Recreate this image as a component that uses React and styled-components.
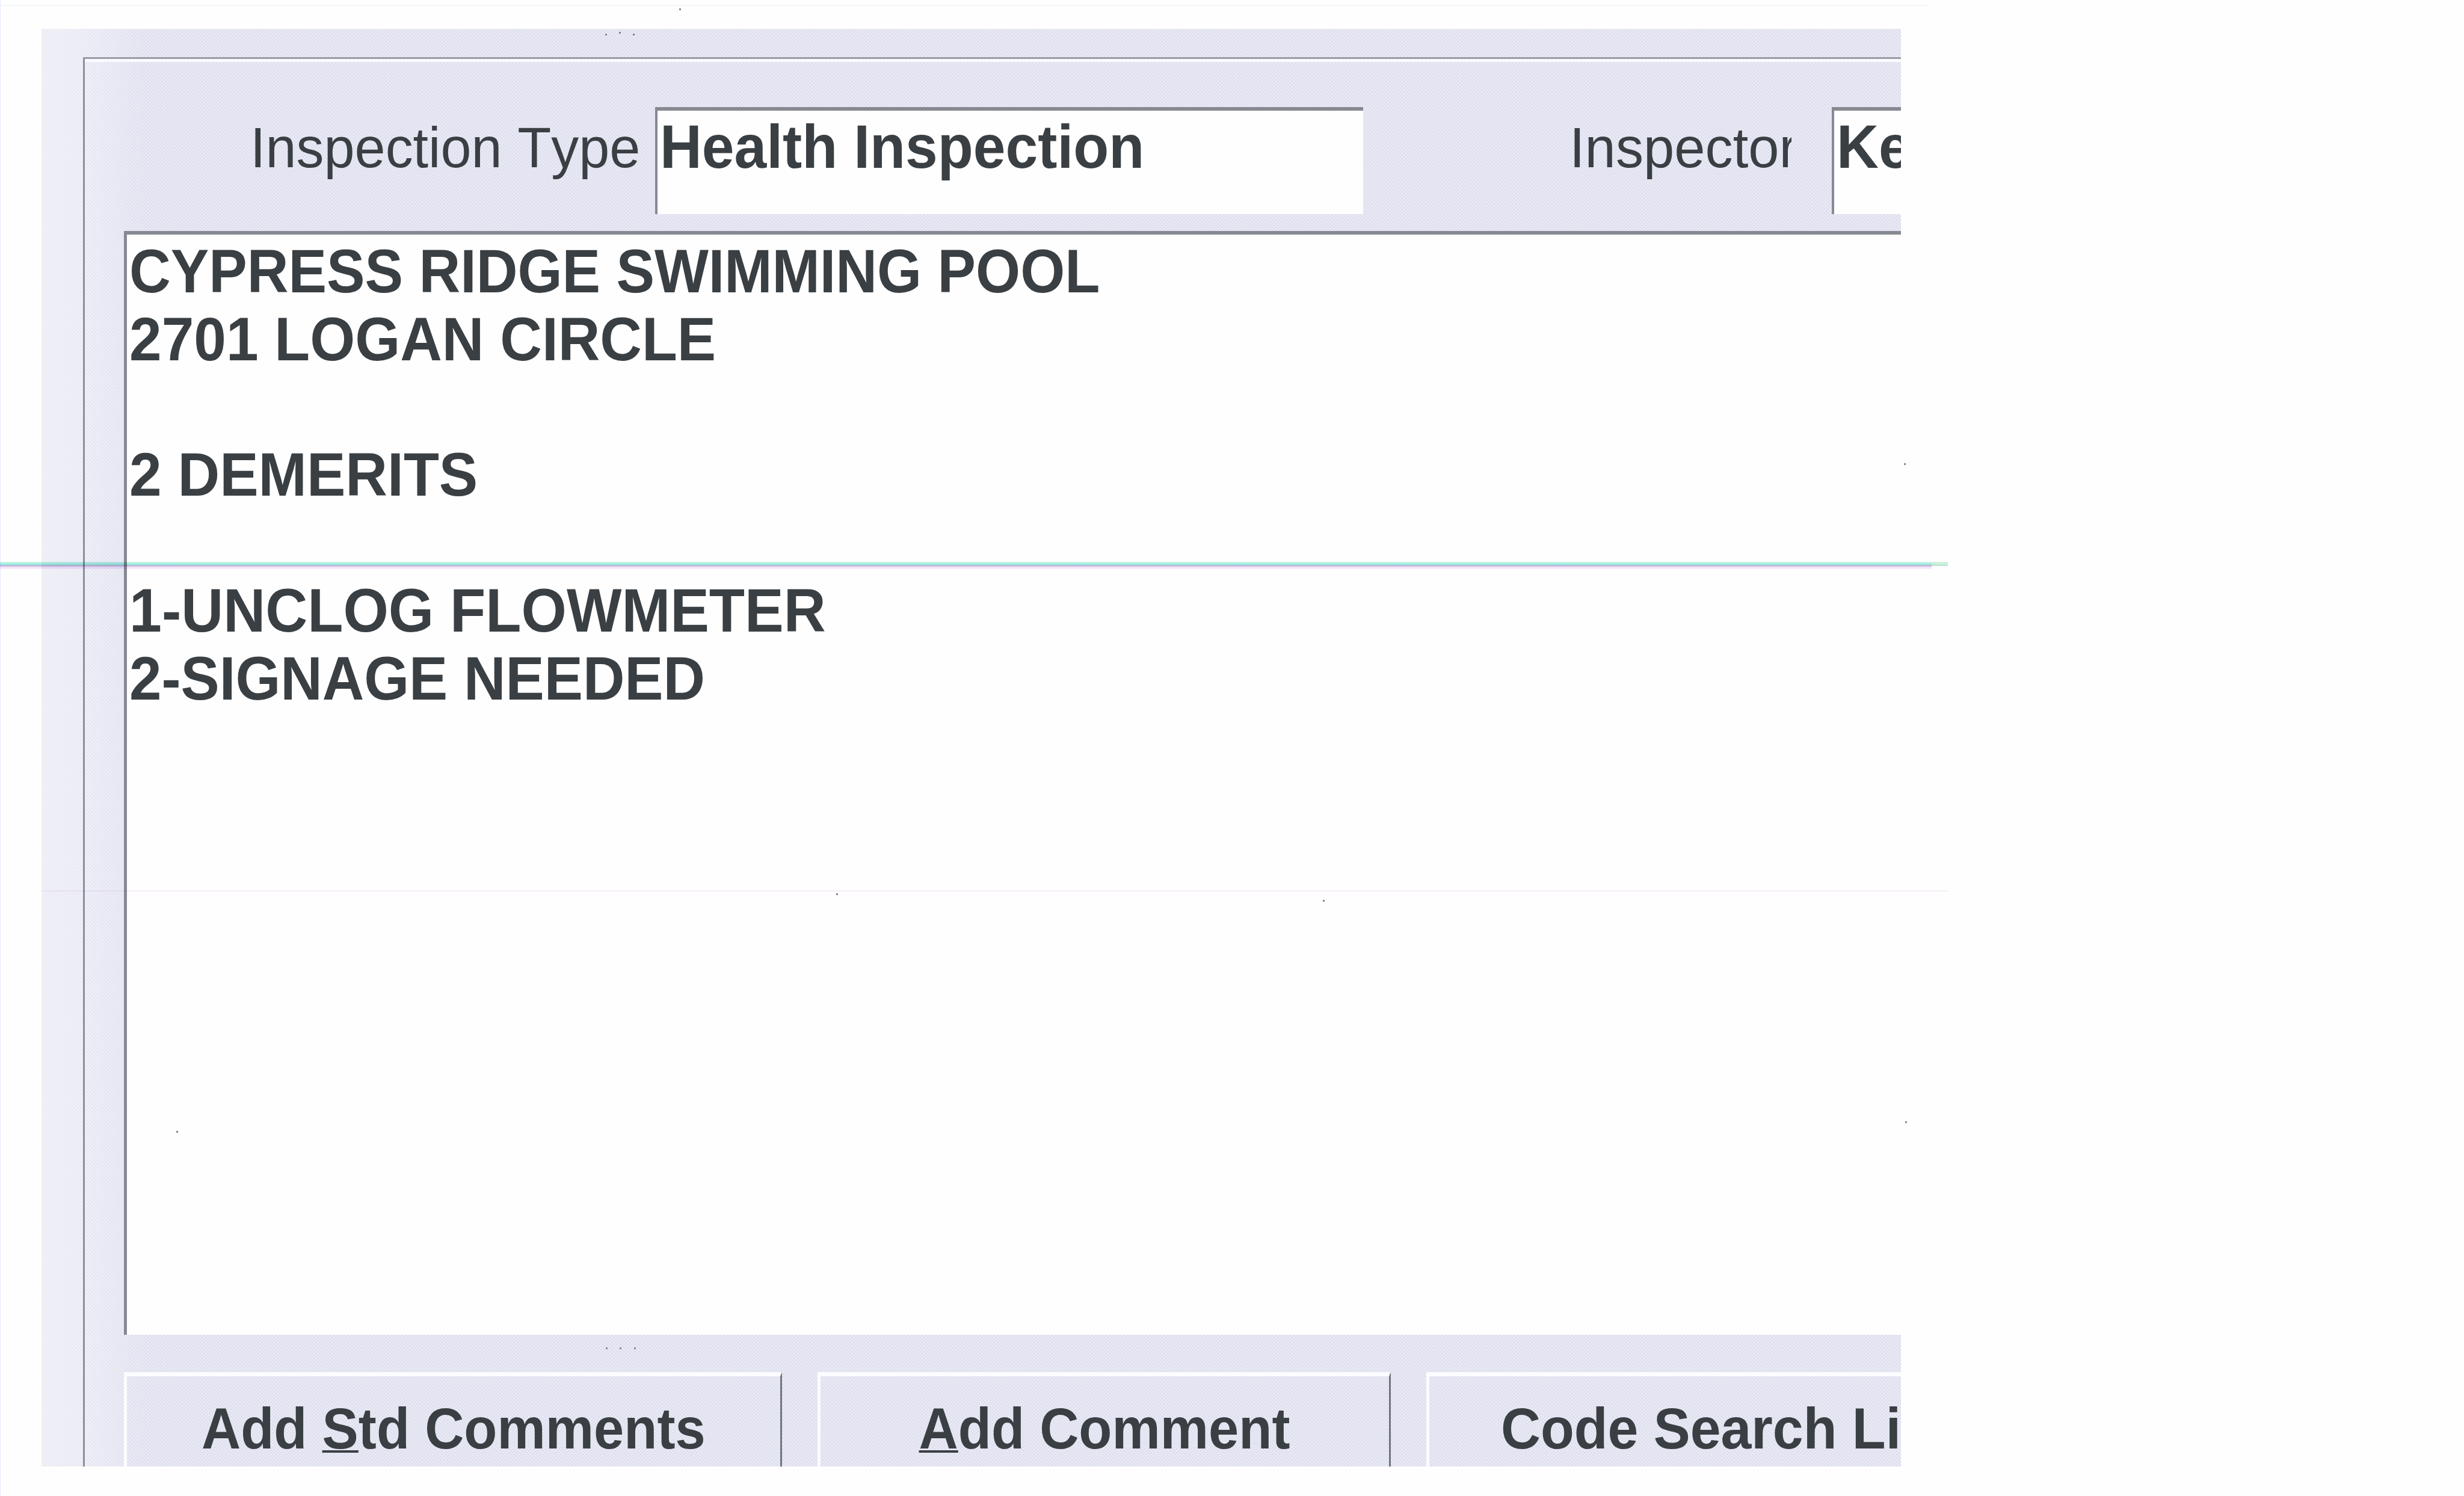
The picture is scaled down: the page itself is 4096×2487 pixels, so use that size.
import React from 'react'
import styled, { createGlobalStyle, css } from 'styled-components'

const GlobalStyle = createGlobalStyle`
  * {
    box-sizing: border-box;
  }
  body {
    margin: 0;
    background: #fefefe;
  }
`

const ink = '#3a3f43'
const edge = '#878992'

const Page = styled.div`
  position: relative;
  width: 4096px;
  height: 2487px;
  padding: 48px 0 0 69px;
  overflow: hidden;
  color: ${ink};
  font-family: "Liberation Sans", Arial, sans-serif;
  font-kerning: none;
  line-height: 112.8px;
  white-space: pre;
`

const Panel = styled.div`
  width: 3091px;
  height: 2390px;
  padding: 47px 0 0 69px;
  overflow: hidden;
  background-color: #e9eaf5;
  background-image:
    linear-gradient(90deg, rgba(255, 255, 255, 0.4) 0, rgba(255, 255, 255, 0.3) 69px, transparent 170px),
    radial-gradient(circle, rgba(190, 192, 216, 0.3) 1px, transparent 2px),
    radial-gradient(circle, rgba(190, 192, 216, 0.3) 1px, transparent 2px);
  background-size: 100% 100%, 6px 6px, 6px 6px;
  background-position: 0 0, 0 0, 3px 3px;
`

const Frame = styled.div`
  display: flex;
  flex-direction: column;
  width: 3200px;
  height: 2400px;
  padding: 80px 0 0 65px;
  border-top: 3px solid #9a9ba5;
  border-left: 3px solid #8e9099;
  box-shadow: inset 0 5px 0 #fafaff;
`

const FieldRow = styled.div`
  display: flex;
  align-items: flex-start;
  height: 206px;
`

const Label = styled.div`
  flex: none;
  width: ${({ width }) => width}px;
  margin-left: ${({ indent }) => indent}px;
  padding-top: 12px;
  overflow: hidden;
  font-size: 94.4px;
`

const Squeezed = styled.div`
  width: max-content;
  transform: scaleX(${({ ratio }) => ratio});
  transform-origin: ${({ origin }) => origin || 'left'} center;
`

const sunken = css`
  border-style: solid;
  border-color: ${edge};
  background: #fefefe;
  font-size: 101.4px;
  font-weight: bold;
`

const Field = styled.div`
  ${sunken}
  flex: none;
  width: ${({ width }) => width}px;
  height: 178px;
  margin-left: ${({ gap }) => gap}px;
  padding: 4px 0 0 4px;
  border-width: 6px 0 0 4px;
`

const Memo = styled.div`
  ${sunken}
  flex: none;
  height: 1835px;
  padding: 5px 0 0 4px;
  border-width: 6px 0 0 5px;
`

const Line = styled(Squeezed)`
  height: 112.8px;
`

const ButtonRow = styled.div`
  display: flex;
  margin-top: 62px;
`

const Button = styled.div`
  display: flex;
  flex: none;
  justify-content: ${({ pad }) => (pad ? 'flex-start' : 'center')};
  width: ${({ width }) => width}px;
  height: 200px;
  margin-right: 59px;
  padding-top: 31px;
  padding-left: ${({ pad }) => pad || 0}px;
  border-style: solid;
  border-width: 7px 3px 0 5px;
  border-color: #fcfcff #70757c transparent #fcfcff;
  font-size: 97.2px;
  font-weight: bold;
`

const Key = styled.span`
  text-decoration: underline;
  text-decoration-thickness: 4px;
  text-decoration-skip-ink: none;
  text-underline-offset: 3px;
`

// scanner line over the whole sheet
const Streak = styled.div`
  position: absolute;
  top: 934px;
  left: 0;
  width: 3211px;
  height: 12px;
  background: linear-gradient(#d4f8ee 0, #a2efe0 3px, #a2efe0 5px, #adb9ce 5px, #bcb9da 7px, #f1dcf7 8px, #faf0fc 12px);
  mix-blend-mode: multiply;
  &::after {
    content: '';
    position: absolute;
    left: 3211px;
    width: 27px;
    height: 7px;
    background: linear-gradient(#d6f5de 0, #c4eed6 5px, #c4d5dc 7px);
  }
`

const FaintLine = styled.div`
  position: absolute;
  top: ${({ y }) => y}px;
  left: ${({ x }) => x}px;
  width: ${({ length }) => length}px;
  height: 2px;
  background: ${({ tone }) => tone};
  mix-blend-mode: multiply;
`

const SheetEdge = styled.div`
  position: absolute;
  top: 0;
  left: 0;
  width: 1px;
  height: 2487px;
  background: #e9e9fb;
`

const Speck = styled.div`
  position: absolute;
  top: ${({ y }) => y}px;
  left: ${({ x }) => x}px;
  width: 3px;
  height: 3px;
  background: #85868f;
`

const comments = [
  { text: 'CYPRESS RIDGE SWIMMING POOL', ratio: 0.939 },
  { text: '2701 LOGAN CIRCLE', ratio: 0.951 },
  { text: ' ', ratio: 1 },
  { text: '2 DEMERITS', ratio: 0.952 },
  { text: ' ', ratio: 1 },
  { text: '1-UNCLOG FLOWMETER', ratio: 0.956 },
  { text: '2-SIGNAGE NEEDED', ratio: 0.949 },
]

const specks = [
  [1129, 14], [1029, 53], [1006, 56], [1052, 56],
  [1007, 2240], [1030, 2240], [1054, 2240],
  [3165, 770], [3167, 1864], [293, 1880], [2199, 1496], [1390, 1485],
]

function App() {
  return (
    <>
      <GlobalStyle />
      <Page>
        <Panel>
          <Frame>
            <FieldRow>
              <Label indent={210} width={669}>
                <Squeezed ratio={0.973}>Inspection Type</Squeezed>
              </Label>
              <Field gap={4} width={1177}>
                <Squeezed ratio={0.953}>Health Inspection</Squeezed>
              </Field>
              <Label indent={343} width={369}>
                <Squeezed ratio={0.977}>Inspector</Squeezed>
              </Label>
              <Field gap={67} width={300}>
                <Squeezed ratio={0.955}>Ke</Squeezed>
              </Field>
            </FieldRow>
            <Memo>
              {comments.map(({ text, ratio }, i) => (
                <Line key={i} ratio={ratio}>{text}</Line>
              ))}
            </Memo>
            <ButtonRow>
              <Button width={1094}>
                <Squeezed ratio={0.929} origin="center">Add <Key>S</Key>td Comments</Squeezed>
              </Button>
              <Button width={953}>
                <Squeezed ratio={0.929} origin="center"><Key>A</Key>dd Comment</Squeezed>
              </Button>
              <Button width={1000} pad={119}>
                <Squeezed ratio={0.94}>Code Search Li</Squeezed>
              </Button>
            </ButtonRow>
          </Frame>
        </Panel>
        <SheetEdge />
        <Streak />
        <FaintLine x={0} y={8} length={3206} tone="#f5f8fc" />
        <FaintLine x={69} y={1480} length={3169} tone="#f8effa" />
        {specks.map(([x, y]) => <Speck key={`${x}-${y}`} x={x} y={y} />)}
      </Page>
    </>
  )
}

export default App
